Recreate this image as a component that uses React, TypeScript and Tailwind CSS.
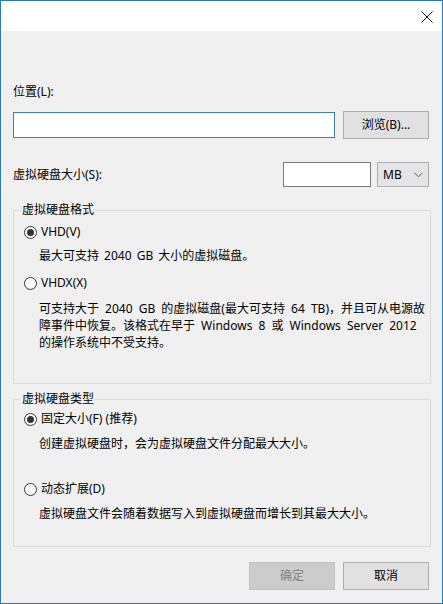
import React from "react";

const font = {
  fontFamily: '"Noto Sans", "Noto Sans CJK SC", sans-serif',
};

function Radio({ checked, label }: { checked?: boolean; label: string }) {
  return (
    <div className="flex h-[18px] items-center">
      <span className="ml-[10px] flex h-[13px] w-[13px] items-center justify-center rounded-full border border-[#333333] bg-white">
        {checked && <span className="h-[7px] w-[7px] rounded-full bg-[#333333]" />}
      </span>
      <span className="ml-[4px] text-[12px] leading-[18px] text-black">{label}</span>
    </div>
  );
}

function Group({ title, children, className }: { title: string; children: React.ReactNode; className?: string }) {
  return (
    <fieldset className={"m-0 border border-[#dcdcdc] p-0 " + (className ?? "")}>
      <legend className="ml-[7px] px-[1px] text-[12px] leading-[18px] text-black">{title}</legend>
      {children}
    </fieldset>
  );
}

export default function App() {
  return (
    <div
      style={font}
      className="flex h-[604px] w-[443px] flex-col border border-[#2b79bd] bg-[#f0f0f0] text-[12px] text-black"
    >
      {/* title bar */}
      <div className="flex h-[30px] shrink-0 items-center justify-end bg-white pr-[9px]">
        <svg width="12" height="12" viewBox="0 0 12 12" className="mt-[1px]">
          <path d="M0.5 0.5 L11.5 11.5 M11.5 0.5 L0.5 11.5" stroke="#111" strokeWidth="1" fill="none" />
        </svg>
      </div>

      <div className="flex flex-1 flex-col pl-[12px] pr-[11px]">
        <div className="mt-[52px] leading-[18px]">位置(L):</div>

        <div className="mt-[10px] flex items-center pr-[2px]">
          <div className="h-[26px] w-[322px] border border-[#3c7fb1] bg-white" />
          <button className="ml-auto h-[28px] w-[86px] border border-[#adadad] bg-[#e1e1e1] text-[12px] leading-[18px]">
            浏览(B)...
          </button>
        </div>

        <div className="mt-[23px] flex h-[25px] items-center pr-[2px]">
          <span className="leading-[18px]">虚拟硬盘大小(S):</span>
          <div className="ml-auto h-[25px] w-[88px] border border-[#7a7a7a] bg-white" />
          <div className="ml-[6px] flex h-[25px] w-[52px] items-center justify-between border border-[#adadad] bg-[#e5e5e5] pl-[5px] pr-[5px]">
            <span className="leading-[18px]">MB</span>
            <svg width="9" height="6" viewBox="0 0 9 6">
              <path d="M0.5 0.8 L4.5 4.8 L8.5 0.8" stroke="#555" strokeWidth="1" fill="none" />
            </svg>
          </div>
        </div>

        <Group title="虚拟硬盘格式" className="mt-[14px] h-[183px]">
          <div className="mt-[4px]">
            <Radio checked label="VHD(V)" />
          </div>
          <div className="ml-[25px] mt-[6px] leading-[18px] [word-spacing:2px]">最大可支持 2040 GB 大小的虚拟磁盘。</div>
          <div className="mt-[9px]">
            <Radio label="VHDX(X)" />
          </div>
          <div className="ml-[25px] mt-[8px] leading-[17px] [word-spacing:3px]">
            可支持大于 2040 GB 的虚拟磁盘(最大可支持 64 TB)，并且可从电源故
            <br />
            障事件中恢复。该格式在早于 Windows 8 或 Windows Server 2012
            <br />
            的操作系统中不受支持。
          </div>
        </Group>

        <Group title="虚拟硬盘类型" className="mt-[6px] h-[157px]">
          <div className="mt-[2px]">
            <Radio checked label="固定大小(F) (推荐)" />
          </div>
          <div className="ml-[25px] mt-[7px] leading-[18px]">创建虚拟硬盘时，会为虚拟硬盘文件分配最大大小。</div>
          <div className="mt-[27px]">
            <Radio label="动态扩展(D)" />
          </div>
          <div className="ml-[25px] mt-[7px] leading-[18px]">虚拟硬盘文件会随着数据写入到虚拟硬盘而增长到其最大大小。</div>
        </Group>

        <div className="mt-[15px] flex justify-end gap-[8px] pr-[2px]">
          <button
            disabled
            className="h-[28px] w-[86px] border border-[#bfbfbf] bg-[#cccccc] text-[12px] leading-[18px] text-[#838383]"
          >
            确定
          </button>
          <button className="h-[28px] w-[86px] border border-[#adadad] bg-[#e1e1e1] text-[12px] leading-[18px]">
            取消
          </button>
        </div>
      </div>
    </div>
  );
}
